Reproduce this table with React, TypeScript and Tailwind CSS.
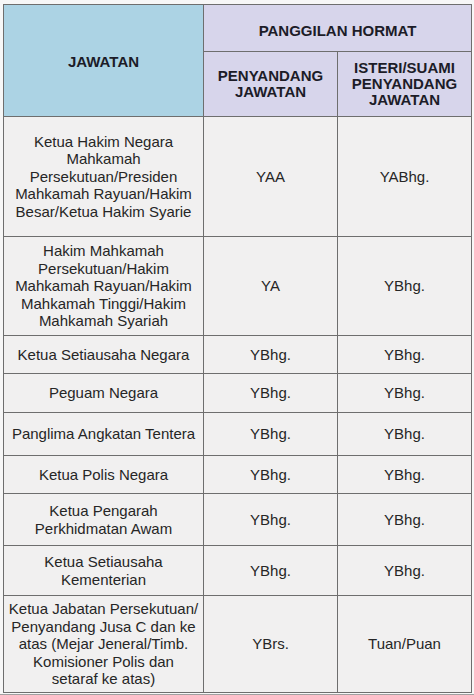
const rows: { jawatan: string[]; penyandang: string; pasangan: string; h: string }[] = [
  {
    jawatan: ['Ketua Hakim Negara', 'Mahkamah', 'Persekutuan/Presiden', 'Mahkamah Rayuan/Hakim', 'Besar/Ketua Hakim Syarie'],
    penyandang: 'YAA',
    pasangan: 'YABhg.',
    h: 'h-[120px]',
  },
  {
    jawatan: ['Hakim Mahkamah', 'Persekutuan/Hakim', 'Mahkamah Rayuan/Hakim', 'Mahkamah Tinggi/Hakim', 'Mahkamah Syariah'],
    penyandang: 'YA',
    pasangan: 'YBhg.',
    h: 'h-[99px]',
  },
  { jawatan: ['Ketua Setiausaha Negara'], penyandang: 'YBhg.', pasangan: 'YBhg.', h: 'h-[38px]' },
  { jawatan: ['Peguam Negara'], penyandang: 'YBhg.', pasangan: 'YBhg.', h: 'h-[39px]' },
  { jawatan: ['Panglima Angkatan Tentera'], penyandang: 'YBhg.', pasangan: 'YBhg.', h: 'h-[43px]' },
  { jawatan: ['Ketua Polis Negara'], penyandang: 'YBhg.', pasangan: 'YBhg.', h: 'h-[38px]' },
  { jawatan: ['Ketua Pengarah', 'Perkhidmatan Awam'], penyandang: 'YBhg.', pasangan: 'YBhg.', h: 'h-[52px]' },
  { jawatan: ['Ketua Setiausaha', 'Kementerian'], penyandang: 'YBhg.', pasangan: 'YBhg.', h: 'h-[50px]' },
  {
    jawatan: ['Ketua Jabatan Persekutuan/', 'Penyandang Jusa C dan ke', 'atas (Mejar Jeneral/Timb.', 'Komisioner Polis dan', 'setaraf ke atas)'],
    penyandang: 'YBrs.',
    pasangan: 'Tuan/Puan',
    h: 'h-[97px]',
  },
];

const cell = 'border-[1.5px] border-[#6e6e6e] text-center align-middle p-0';

export default function App() {
  return (
    <div className="w-[474px] h-[695px] bg-[#f7f7f7] overflow-hidden" style={{ fontFamily: '"Liberation Sans", Arial, sans-serif' }}>
      <div className="pt-[4px] pl-[3px]">
        <table className="table-fixed border-collapse w-[468px] text-[#262626] text-[15px] leading-[17.5px]">
          <colgroup>
            <col className="w-[200px]" />
            <col className="w-[134px]" />
            <col className="w-[134px]" />
          </colgroup>
          <thead className="font-bold text-[#1c1c28]">
            <tr className="h-[47px]">
              <th rowSpan={2} className={`${cell} bg-[#acd3e4] pt-[2px]`}>
                JAWATAN
              </th>
              <th colSpan={2} className={`${cell} bg-[#d7d5eb] pt-[6px]`}>
                PANGGILAN HORMAT
              </th>
            </tr>
            <tr className="h-[65px]">
              <th className={`${cell} bg-[#d7d5eb] leading-[16px]`}>
                PENYANDANG
                <br />
                JAWATAN
              </th>
              <th className={`${cell} bg-[#d7d5eb] leading-[16px]`}>
                ISTERI/SUAMI
                <br />
                PENYANDANG
                <br />
                JAWATAN
              </th>
            </tr>
          </thead>
          <tbody className="bg-[#f1f0f0]">
            {rows.map((r, i) => (
              <tr key={i} className={r.h}>
                <td className={cell}>
                  {r.jawatan.map((l, j) => (
                    <div key={j} className="whitespace-nowrap">
                      {l}
                    </div>
                  ))}
                </td>
                <td className={cell}>{r.penyandang}</td>
                <td className={cell}>{r.pasangan}</td>
              </tr>
            ))}
          </tbody>
        </table>
      </div>
      <div className="h-[4px] mt-[1px] bg-gradient-to-b from-[#9a9a9a] to-[#d0d0d0]" />
    </div>
  );
}
